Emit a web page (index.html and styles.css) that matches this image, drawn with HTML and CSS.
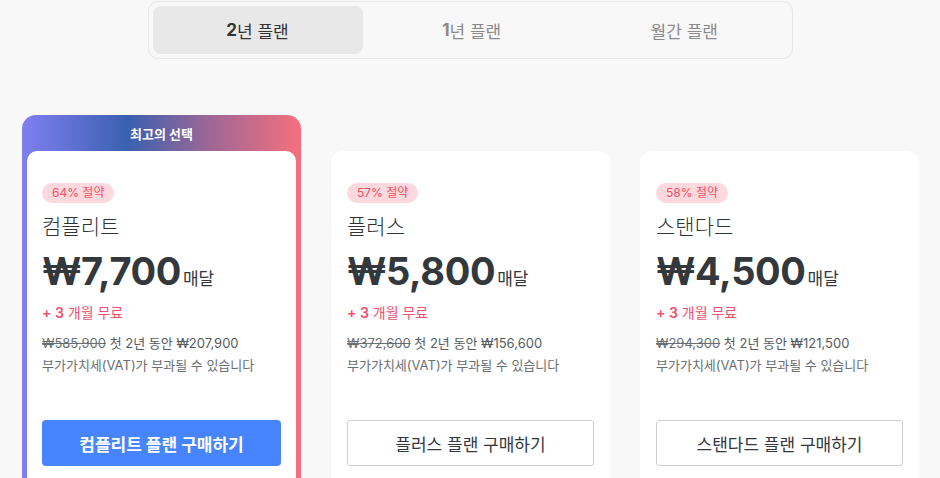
FILE: index.html
```html
<!DOCTYPE html>
<html lang="ko">
<head>
<meta charset="utf-8">
<title>플랜</title>
<link rel="stylesheet" href="styles.css">
</head>
<body>
<div class="page">
  <div class="toggle">
    <div class="tab active"><b>2</b>년 플랜</div>
    <div class="tab"><b>1</b>년 플랜</div>
    <div class="tab">월간 플랜</div>
  </div>

  <div class="plans">
    <div class="featured">
      <div class="featured-head">최고의 선택</div>
      <div class="card inner">
        <span class="badge">64% 절약</span>
        <div class="name">컴플리트</div>
        <div class="price"><span class="amount">₩7,700</span><span class="per">매달</span></div>
        <div class="free"><b>+ 3</b> 개월 무료</div>
        <div class="total"><s>₩585,900</s> 첫 2년 동안 ₩207,900</div>
        <div class="vat">부가가치세(VAT)가 부과될 수 있습니다</div>
        <button class="btn primary">컴플리트 플랜 구매하기</button>
      </div>
    </div>

    <div class="card">
      <span class="badge">57% 절약</span>
      <div class="name">플러스</div>
      <div class="price"><span class="amount">₩5,800</span><span class="per">매달</span></div>
      <div class="free"><b>+ 3</b> 개월 무료</div>
      <div class="total"><s>₩372,600</s> 첫 2년 동안 ₩156,600</div>
      <div class="vat">부가가치세(VAT)가 부과될 수 있습니다</div>
      <button class="btn outline">플러스 플랜 구매하기</button>
    </div>

    <div class="card">
      <span class="badge">58% 절약</span>
      <div class="name">스탠다드</div>
      <div class="price"><span class="amount">₩4,500</span><span class="per">매달</span></div>
      <div class="free"><b>+ 3</b> 개월 무료</div>
      <div class="total"><s>₩294,300</s> 첫 2년 동안 ₩121,500</div>
      <div class="vat">부가가치세(VAT)가 부과될 수 있습니다</div>
      <button class="btn outline">스탠다드 플랜 구매하기</button>
    </div>
  </div>
</div>
</body>
</html>
```

FILE: styles.css
```css
* { box-sizing: border-box; }
html, body {
  margin: 0;
  padding: 0;
  background: #f8f8f8;
  font-family: Inter, "Noto Sans CJK KR", "Noto Sans", sans-serif;
  color: #333a40;
  overflow: hidden;
}
.page {
  width: 940px;
  height: 478px;
  padding-top: 1px;
}
.toggle {
  width: 645px;
  height: 58px;
  margin: 0 auto;
  border: 1px solid #e6e6e6;
  border-radius: 10px;
  padding: 4px;
  display: grid;
  grid-template-columns: 210px 1fr 1fr;
}
.tab {
  display: flex;
  align-items: center;
  justify-content: center;
  font-size: 17px;
  color: #8a8a8a;
  border-radius: 8px;
}
.tab + .tab { padding-left: 6px; }
.tab b { font-weight: 700; }
.tab.active {
  background: #e8e8e8;
  color: #333;
  font-weight: 400;
}
.plans {
  margin: 56px 0 0 22px;
  display: grid;
  grid-template-columns: 279px 279px 279px;
  column-gap: 30px;
  align-items: end;
}
.featured {
  border-radius: 14px 14px 0 0;
  background: linear-gradient(90deg, #7f7ff0 0%, #3a60b0 38%, #9a6796 66%, #f6707e 100%);
  padding: 0 5px;
}
.featured-head {
  height: 36px;
  display: flex;
  align-items: center;
  justify-content: center;
  color: #fff;
  font-size: 13px;
  font-weight: 700;
}
.card {
  background: #fff;
  border-radius: 12px 12px 0 0;
  padding: 32px 16px 12px;
  height: 327px;
  display: flex;
  flex-direction: column;
  align-items: flex-start;
}
.card.inner {
  border-radius: 10px 10px 0 0;
  padding: 32px 15px 12px;
}
.badge {
  display: inline-block;
  height: 20px;
  line-height: 20px;
  padding: 0 10px;
  border-radius: 10px;
  background: #fdd9dd;
  color: #ef4f6a;
  font-size: 12px;
}
.name {
  margin-top: 10px;
  font-size: 21px;
  line-height: 28px;
  font-weight: 300;
  color: #2f3337;
}
.price {
  margin-top: 6px;
  height: 48px;
  display: flex;
  align-items: baseline;
  white-space: nowrap;
}
.amount {
  font-size: 38px;
  line-height: 48px;
  font-weight: 700;
  letter-spacing: -0.4px;
  color: #33383d;
}
.per {
  margin-left: 2px;
  font-size: 17px;
  color: #33383d;
}
.free {
  margin-top: 8px;
  font-size: 14px;
  line-height: 20px;
  color: #f0506e;
}
.free b { font-weight: 600; }
.total {
  margin-top: 10px;
  font-size: 13px;
  line-height: 20px;
  color: #555b61;
  white-space: nowrap;
}
.total s { color: #6a6f74; }
.vat {
  margin-top: 2px;
  font-size: 13px;
  line-height: 20px;
  color: #6a6f74;
  white-space: nowrap;
}
.btn {
  margin-top: 45px;
  width: 100%;
  height: 47px;
  font-family: inherit;
  font-size: 17px;
  cursor: pointer;
}
.btn.primary {
  background: #4685ff;
  border: 0;
  border-radius: 4px;
  color: #fff;
  font-weight: 700;
}
.btn.outline {
  background: #fff;
  border: 1px solid #cfcfcf;
  border-radius: 3px;
  color: #33383d;
  font-weight: 400;
}
```
